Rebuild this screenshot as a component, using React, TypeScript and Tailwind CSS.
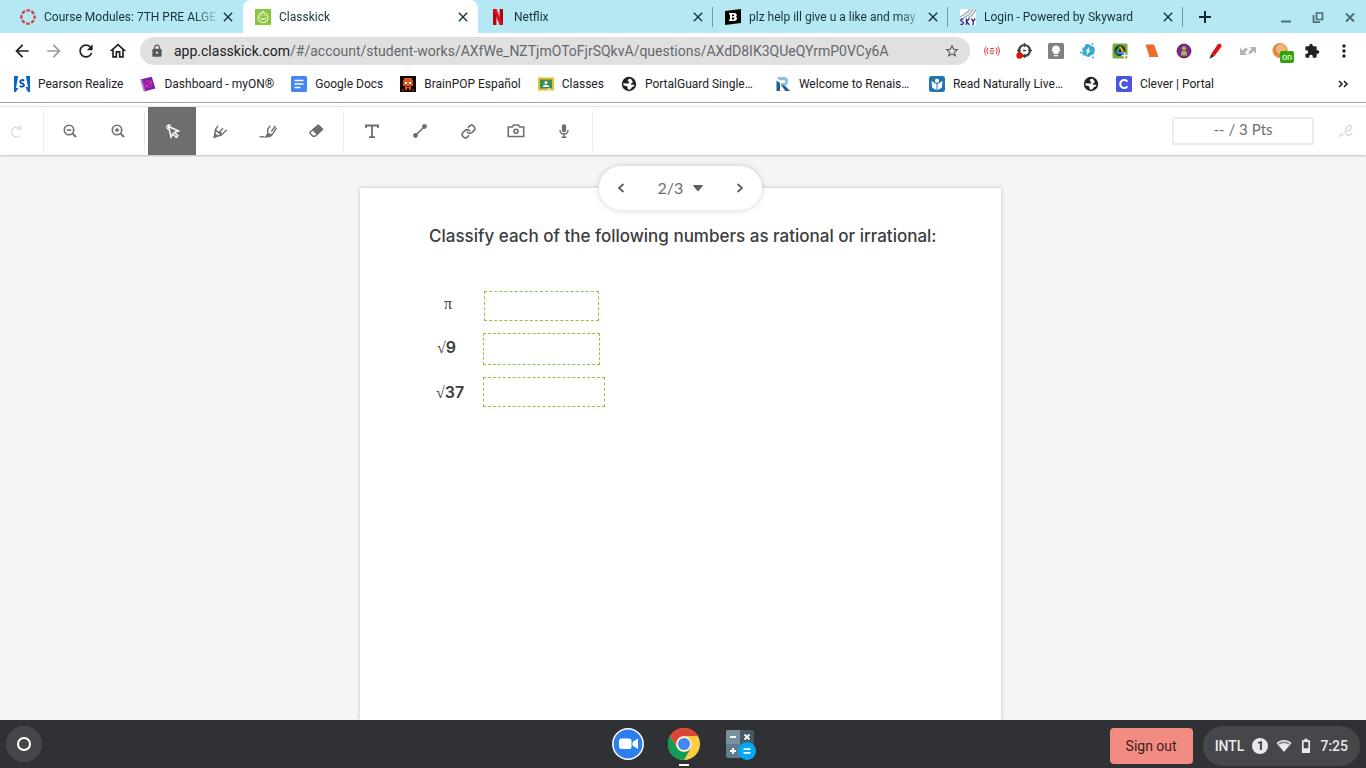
import type { ReactNode } from 'react'
import { Link } from 'lucide-react'
import {
    MdArrowBack,
    MdArrowForward,
    MdClose,
    MdExtension,
    MdLock,
    MdMoreVert,
    MdOutlineHome,
    MdRefresh,
    MdStarBorder,
} from 'react-icons/md'

interface Tab {
    title: string
    icon: ReactNode
    active?: boolean
    divider?: boolean
}

interface Item {
    label: string
    icon: ReactNode
    text?: string
}

const CanvasIcon = () => (
    <svg viewBox="0 0 16 16" className="size-4">
        <circle cx="8" cy="8" r="6.6" fill="none" stroke="#d64045" strokeWidth="2.4" strokeDasharray="3.6 1.58" strokeDashoffset="1.8" />
    </svg>
)

const ClasskickIcon = () => (
    <svg viewBox="0 0 16 16" className="size-4" fill="none" stroke="#eef8dc">
        <rect width="16" height="16" fill="#8cc63f" stroke="none" />
        <circle cx="8" cy="8.6" r="4.9" strokeWidth="1.1" />
        <path d="M4.6 7.8c.6 2.6 5.8 3 6.6.4M6 9.6c1 1.2 3.2 1 4 0M5.4 4.4 8 2.4l2 1.4M6.2 6.4h1.2M9 6.4h1.2" strokeWidth="1" />
    </svg>
)

const NetflixIcon = () => (
    <svg viewBox="0 0 16 16" className="size-4">
        <path d="M3 0h3.4v16L3 15.9zM9.6 0H13v16l-3.4-.1z" fill="#b1060f" />
        <path d="M3 0h3.4L13 16l-3.4-.2z" fill="#e50914" />
    </svg>
)

const BrainlyIcon = () => (
    <svg viewBox="0 0 16 16" className="size-4">
        <path d="M0 2 16 0v14L0 16z" fill="#000" />
        <path fillRule="evenodd" d="M4 4h5c3 0 3.6 2.8 1.8 3.8C13 8.8 12 12 9 12H4v-1.6h1V5.6H4zM7 5.6v1.6h1.4c1 0 1-1.6 0-1.6zm0 3v1.8h1.6c1.1 0 1.1-1.8 0-1.8z" fill="#fff" />
    </svg>
)

const SkywardIcon = () => (
    <svg viewBox="0 0 16 16" className="size-4" fill="none">
        <rect width="16" height="16" fill="#fff" />
        <path d="M0 8C4 6 8 4 10 0M3 9c5-2 8-5 10-9M8 9c4-2 6-5 8-9" stroke="#9aa4b4" strokeWidth="1.3" />
        <path d="M3.6 10.4C2 9.4.6 10 .8 11.4c.2 1.4 2.8 1.2 2.8 2.6 0 1.6-2 1.6-3.2.8M6.4 9.6V16M9.4 9.6l-3 3.2 3.2 3M11.4 9.6l1.8 3 2-3M13.2 12.6V16" stroke="#26358c" strokeWidth="1.4" />
    </svg>
)

const PearsonIcon = () => (
    <svg viewBox="0 0 16 16" className="size-4">
        <rect width="16" height="16" fill="#0a63c9" />
        <path d="M4.2 0h7.6l2.2 11h-2.600L14 16H1.600l3-4H2z" fill="#fff" />
        <path d="M10.200 4.800C8.400 3.400 6 3.900 6.200 5.900c.2 1.600 3.800 1.200 3.800 3.200 0 1.800-2.600 2-4.200.8" fill="none" stroke="#0a4bb0" strokeWidth="1.900" />
    </svg>
)

const MyOnIcon = () => (
    <svg viewBox="0 0 16 16" className="size-4">
        <path d="m.4 3.600 11.400-2.800 3.600 11.800L4 15.600z" fill="#7b1fa2" />
        <path d="m.4 3.600 3.600 12 1.400-.4L2 3.200z" fill="#c77ddb" />
        <circle cx="8.400" cy="8" r="3.200" fill="none" stroke="#d81bb5" strokeWidth="1.3" />
        <path d="m4.500 11.500 8-6.500" stroke="#f06292" strokeWidth=".8" />
    </svg>
)

const DocsIcon = () => (
    <svg viewBox="0 0 16 16" className="size-4">
        <rect width="16" height="16" rx="1.500" fill="#4285f4" />
        <path d="M3.500 4.500h9M3.500 8h9M3.500 11.500h6" stroke="#fff" strokeWidth="1.600" />
    </svg>
)

const BrainPopIcon = () => (
    <svg viewBox="0 0 16 16" className="size-4">
        <rect width="16" height="16" fill="#120c0a" />
        <path d="M4 2h8v2h1v6h-2v4H9v-2H7v2H5v-4H3V4h1z" fill="#d9531e" />
        <path d="M5 6h2v2H5zM9 6h2v2H9z" fill="#fff" />
        <path d="M6 10h4v1H6zM2 13h2v2H2zM12 13h2v2h-2z" fill="#7c2712" />
    </svg>
)

const ClassroomIcon = () => (
    <svg viewBox="0 0 16 16" className="size-4">
        <path d="M0 1.500h16v13H0z" fill="#e9bd2c" />
        <path d="M2 3.500h12v9H2z" fill="#359154" />
        <circle cx="8" cy="6.500" r="1.500" fill="#fff" />
        <path d="M4.800 11c.2-3 6.200-3 6.400 0z" fill="#fff" />
        <path d="M9.500 12.500h3v1h-3z" fill="#fff" />
    </svg>
)

const GlobeIcon = () => (
    <svg viewBox="0 0 16 16" className="size-4">
        <circle cx="8" cy="8" r="7.200" fill="#202124" />
        <path d="M9 2.800c-1.500 0-2.400.9-2.200 2 .2 1 1.400.7 1.500 1.700.1.900-1.300 1-2.600.9L2.400 7.200C2 9 2.800 9.600 4 9.700c1.600.1 2.600.5 2.500 1.800-.1 1 .7 2 1.500 2.200 2.300-.3 2.200-2.600 3.800-3 1-.2 1.600-.8 1.600-1.800-1.400-.3-2.600.3-3.700-.6.2-1.300 1.600-1 2-2 .3-1-.5-1.300-.9-2-.4-.8-.9-1.500-1.800-1.500z" fill="#fff" />
    </svg>
)

const RenaissanceIcon = () => (
    <svg viewBox="0 0 16 16" className="size-4">
        <path d="M2 1h7c5.500 0 5.500 8 1 8.400L15 15h-4L6 9V7h3c1.600 0 1.600-2.800 0-2.800H4z" fill="#8cc0de" />
        <path d="M1.500 4.500 5 7v8H1.500zM6 9l3.500.5L15 15h-4.500z" fill="#1e5f94" />
    </svg>
)

const ReadNaturallyIcon = () => (
    <svg viewBox="0 0 16 16" className="size-4">
        <rect width="16" height="16" rx="2.500" fill="#2276b0" />
        <path d="m8 2.500 2 1.200v2L8 7 6 5.700v-2zM2.500 5 7.500 8v6l-4.300-2.300zM13.500 5l-5 3v6l4.300-2.300z" fill="#fff" />
    </svg>
)

const CleverIcon = () => (
    <svg viewBox="0 0 16 16" className="size-4">
        <rect width="16" height="16" rx="1.500" fill="#4a54e0" />
        <path d="M11.400 5.600A4 4 0 1 0 11.400 10.400" fill="none" stroke="#fff" strokeWidth="2.100" />
    </svg>
)

const tabs: Tab[] = [
    { title: 'Course Modules: 7TH PRE ALGE', icon: <CanvasIcon /> },
    { title: 'Classkick', icon: <ClasskickIcon />, active: true },
    { title: 'Netflix', icon: <NetflixIcon />, divider: true },
    { title: 'plz help ill give u a like and may', icon: <BrainlyIcon />, divider: true },
    { title: 'Login - Powered by Skyward', icon: <SkywardIcon />, divider: true },
]

const bookmarks: Item[] = [
    { label: 'Pearson Realize', text: 'Pearson Realize', icon: <PearsonIcon /> },
    { label: 'myON', text: 'Dashboard - myON®', icon: <MyOnIcon /> },
    { label: 'Docs', text: 'Google Docs', icon: <DocsIcon /> },
    { label: 'BrainPOP', text: 'BrainPOP Español', icon: <BrainPopIcon /> },
    { label: 'Classes', text: 'Classes', icon: <ClassroomIcon /> },
    { label: 'PortalGuard', text: 'PortalGuard Single…', icon: <GlobeIcon /> },
    { label: 'Renaissance', text: 'Welcome to Renais…', icon: <RenaissanceIcon /> },
    { label: 'Read Naturally', text: 'Read Naturally Live…', icon: <ReadNaturallyIcon /> },
    { label: 'Website', icon: <GlobeIcon /> },
    { label: 'Clever', text: 'Clever | Portal', icon: <CleverIcon /> },
]

const extensions: Item[] = [
    {
        label: 'Broadcast',
        icon: (
            <svg viewBox="0 0 16 16" className="size-4" fill="none" stroke="#e0352b" strokeWidth="1">
                <path d="M2.200 3.500c-2 2.500-2 6.500 0 9M4 4.800c-1.400 1.900-1.400 4.500 0 6.400M13.800 3.500c2 2.500 2 6.500 0 9M12 4.800c1.400 1.900 1.400 4.500 0 6.400M6 6.200c1-1 3-1 4 0M5.500 8h5M6 9.800c1 1 3 1 4 0" />
            </svg>
        ),
    },
    {
        label: 'Target',
        icon: (
            <svg viewBox="0 0 16 16" className="size-4" fill="none">
                <circle cx="8.500" cy="7.500" r="5.500" stroke="#444" strokeWidth="2.200" />
                <path d="M8.500 0v4M8.500 11v4M1 7.500h4M12 7.500h4M7 7.500h3" stroke="#444" strokeWidth="1.500" />
                <circle cx="3.500" cy="12.500" r="3.200" fill="#e3120b" />
            </svg>
        ),
    },
    {
        label: 'Dim lights',
        icon: (
            <svg viewBox="0 0 16 16" className="size-4">
                <rect width="16" height="16" rx="1.500" fill="#808386" />
                <path d="M8 2.600a4 4 0 0 0-2.200 7.300V11h4.400V9.900A4 4 0 0 0 8 2.600zM6.200 12h3.600v1.200H6.200z" fill="#fff" />
            </svg>
        ),
    },
    {
        label: 'Lightning',
        icon: (
            <svg viewBox="0 0 16 16" className="size-4">
                <path d="M5 2c2-1.600 5-1 6 1 3 0 4.500 2.400 3.500 5 .4 2.600-1.500 4-3.500 4-1 2.500-4.500 2.500-5.500.6C2.500 13 1.500 10.500 3 8.500 1.500 6 3 4 5 4z" fill="#35a9d6" />
                <path d="M9.500 3.500 5.500 8.500h2l-1 4 4.200-5.200H8.500z" fill="#fff" />
                <circle cx="1" cy="9.500" r="1" fill="#35a9d6" />
                <circle cx="12.500" cy="1" r="1" fill="#35a9d6" />
                <circle cx="13" cy="14.500" r="1" fill="#35a9d6" />
            </svg>
        ),
    },
    {
        label: 'Drive saver',
        icon: (
            <svg viewBox="0 0 16 16" className="size-4">
                <rect x=".5" y=".5" width="15" height="15" rx="1.500" fill="#73ad3b" />
                <circle cx="8" cy="7.500" r="5.500" fill="#263238" />
                <path d="M6.900 3.500h1.600L5.800 10.800 3.700 9.300z" fill="#34a853" />
                <path d="M7.200 3.500h1.800l3.400 5.700h-2.200z" fill="#fbbc04" />
                <path d="M5.600 9h6.800l-1.200 2H4.600z" fill="#4285f4" />
                <path d="M12.500 9.500v6M9.500 12.500h6" stroke="#fff" strokeWidth="1.500" />
            </svg>
        ),
    },
    {
        label: 'Orange page',
        icon: (
            <svg viewBox="0 0 16 16" className="size-4">
                <path d="M1.500 1.500H10l4.500 12.500H6z" fill="#f26a2b" />
                <path d="M1.500 1.500 6 14v1.500z" fill="#b94a14" />
            </svg>
        ),
    },
    {
        label: 'Profile',
        icon: (
            <svg viewBox="0 0 16 16" className="size-4">
                <circle cx="8" cy="8" r="6.900" fill="#7b2a8c" stroke="#552060" strokeWidth="1" />
                <circle cx="8" cy="5.400" r="2.100" fill="#a5b94a" />
                <path d="M5.800 8h4.400l1 4.500H4.800z" fill="#a5b94a" />
            </svg>
        ),
    },
    {
        label: 'Marker',
        icon: (
            <svg viewBox="0 0 16 16" className="size-4">
                <path d="M10 1c2-1 4 .5 3.500 2.500L6.500 13 3.200 11z" fill="#dc1212" />
                <path d="m3.200 11 3.300 2L1.500 15.800z" fill="#3c1a14" />
            </svg>
        ),
    },
    {
        label: 'Arrows',
        icon: (
            <svg viewBox="0 0 16 16" className="size-4" fill="#b3b3b3">
                <path d="M0 4.500V12h7L4.800 9.800 8 6.500 6 4.500 2.400 7.600zM16 11V4H9.500l2 2L8.200 9.500l2 2L13.600 8z" />
            </svg>
        ),
    },
    {
        label: 'Blocker',
        icon: (
            <span className="relative block size-4">
                <svg viewBox="0 0 16 16" className="size-4">
                    <circle cx="8" cy="7.500" r="7.500" fill="#d98a45" />
                    <circle cx="9" cy="6" r="5" fill="#efb878" />
                </svg>
                <span className="absolute top-2 left-2 h-3 w-3.5 rounded-xs bg-[#2fa70a] text-center text-[9px] leading-3 text-white">on</span>
            </span>
        ),
    },
    { label: 'Extensions', icon: <MdExtension className="size-4 text-[#202124]" /> },
    { label: 'Menu', icon: <MdMoreVert className="size-4 scale-125 text-[#202124]" /> },
]

const strokeIcon = { viewBox: '0 0 20 20', className: 'size-5', fill: 'none', stroke: 'currentColor', strokeWidth: 1.6 }

const zoomTools: Item[] = [
    {
        label: 'Zoom out',
        icon: (
            <svg {...strokeIcon}>
                <circle cx="9" cy="9" r="4.700" />
                <path d="M12.400 12.400 16 16" strokeWidth="2" />
                <path d="M6.800 9h4.400" />
            </svg>
        ),
    },
    {
        label: 'Zoom in',
        icon: (
            <svg {...strokeIcon}>
                <circle cx="9" cy="9" r="4.700" />
                <path d="M12.400 12.400 16 16" strokeWidth="2" />
                <path d="M6.800 9h4.400M9 6.800v4.400" strokeWidth="1.400" />
            </svg>
        ),
    },
]

const drawTools: Item[] = [
    {
        label: 'Select',
        icon: (
            <svg {...strokeIcon} strokeWidth={1.5}>
                <path d="M6.500 5.500 16.500 10l-4 1.400 3.400 3.400-1.600 1.600-3.500-3.600L9 16z" />
                <path d="M6.500 8.400A2.300 2.300 0 1 1 8.800 4.600" strokeWidth="1.100" />
            </svg>
        ),
    },
    {
        label: 'Pen',
        icon: (
            <svg {...strokeIcon} strokeWidth={1.4}>
                <path d="M8 4.800 5.400 8.500 4.500 15.800l6.800-1.600 5.400-5.400M5.600 9l3.200 3 2.800 2M8.600 11.800l4.400-4.600M8.600 11.800h3.200" />
                <path d="M4.200 16.200 5 12.800l2.400 2.400z" fill="currentColor" />
            </svg>
        ),
    },
    {
        label: 'Highlighter',
        icon: (
            <svg {...strokeIcon} strokeWidth={1.4}>
                <path d="m12.200 4.600-2.600 4 .2 4.400 4.400.6L18.500 7.200M13.300 10.500 17.500 5M9.800 13l-1.400 2.600M14.200 13.600l-3 2" />
                <path d="M1.500 15.800h5" />
                <path d="M7.800 16 9.600 12.800l2.400 2.400z" fill="currentColor" />
            </svg>
        ),
    },
    {
        label: 'Eraser',
        icon: (
            <svg {...strokeIcon} strokeWidth={1.5}>
                <path d="M12.200 4.200 16.400 8.200 9 15.200H7l-3-3 .2-1.200z" strokeLinejoin="round" />
                <path d="M12.200 4.200 16.400 8.200 11.200 13.200 7 8.800z" fill="currentColor" />
            </svg>
        ),
    },
]

const insertTools: Item[] = [
    {
        label: 'Text',
        icon: (
            <svg {...strokeIcon} strokeWidth={1.8}>
                <path d="M4 7V4.500h12V7M10 4.500V16M7 16.200h6" />
            </svg>
        ),
    },
    {
        label: 'Line',
        icon: (
            <svg {...strokeIcon}>
                <path d="M5.500 14.500 14.500 5.500" />
                <circle cx="5.500" cy="14.500" r="1.600" fill="currentColor" />
                <circle cx="14.500" cy="5.500" r="1.600" fill="currentColor" />
            </svg>
        ),
    },
    { label: 'Link', icon: <Link size={15} strokeWidth={2.6} /> },
    {
        label: 'Camera',
        icon: (
            <svg {...strokeIcon}>
                <path d="M2.300 6h3.900l1.500-2h4.600l1.500 2h3.900v9.500H2.300z" />
                <circle cx="10" cy="10.300" r="2" />
            </svg>
        ),
    },
    {
        label: 'Microphone',
        icon: (
            <svg {...strokeIcon} strokeWidth={1.4}>
                <path d="M6 9c0 5.300 8 5.300 8 0M10 13v3.200M7.500 16.200h5" />
                <rect x="8.500" y="4" width="3" height="6.500" rx="1.500" fill="currentColor" />
            </svg>
        ),
    },
]

function ToolGroup({ tools, active }: { tools: Item[]; active?: string }) {
    return (
        <>
            {tools.map((tool) => (
                <button
                    key={tool.label}
                    aria-label={tool.label}
                    className={`flex h-12 w-12 items-center justify-center ${tool.label === active ? 'bg-[#6d6e70] text-white' : 'text-[#6d6e70]'}`}
                >
                    {tool.icon}
                </button>
            ))}
        </>
    )
}

function TabStrip() {
    return (
        <div className="flex h-[33px] shrink-0 items-stretch bg-[#b5e8f2] pl-2 text-[12px] text-[#17323a]">
            {tabs.map((tab) => (
                <div
                    key={tab.title}
                    className={`flex w-[235px] min-w-0 items-center ${tab.active ? 'rounded-t-lg bg-white' : ''}`}
                >
                    <div className="flex min-w-0 flex-1 items-center gap-2 pl-3">
                        <span className="shrink-0">{tab.icon}</span>
                        <span className="flex-1 overflow-hidden mask-r-from-85% whitespace-nowrap">{tab.title}</span>
                    </div>
                    <button aria-label={`Close ${tab.title.split(' ')[0]}`} className="mr-1.5 shrink-0">
                        <MdClose className="size-4 [stroke:currentColor]" />
                    </button>
                    <span className={`h-5 w-px ${tab.divider ? 'bg-[#6f9ba5]' : ''}`} />
                </div>
            ))}
            <button aria-label="New tab" className="ml-3.5">
                <svg viewBox="0 0 16 16" className="size-4" stroke="#10272d" strokeWidth="2">
                    <path d="M8 2v12M2 8h12" />
                </svg>
            </button>
            <div className="ml-auto flex items-center gap-4 pr-2 text-[#4f6c74]">
                <button aria-label="Minimize">
                    <svg viewBox="0 0 16 16" className="size-4" stroke="currentColor" strokeWidth="2">
                        <path d="M3 12.500h10" />
                    </svg>
                </button>
                <button aria-label="Restore">
                    <svg viewBox="0 0 16 16" className="size-4" fill="none" stroke="currentColor" strokeWidth="1.700">
                        <path d="M6.500 4h6v6.500h-6zM3.500 6v7.200H10" />
                    </svg>
                </button>
                <button aria-label="Close window">
                    <svg viewBox="0 0 16 16" className="size-4" stroke="currentColor" strokeWidth="2">
                        <path d="m4 4.500 8 8M12 4.500l-8 8" />
                    </svg>
                </button>
            </div>
        </div>
    )
}

function AddressBar() {
    return (
        <div className="flex h-9 shrink-0 items-center gap-3.5 bg-white px-3.5">
            <div className="flex gap-4 text-[#202124]">
                <button aria-label="Back"><MdArrowBack className="size-4 scale-125" /></button>
                <button aria-label="Forward" className="text-[#9a9c9f]"><MdArrowForward className="size-4 scale-125" /></button>
                <button aria-label="Reload"><MdRefresh className="size-4 scale-125" /></button>
                <button aria-label="Home"><MdOutlineHome className="size-4 scale-125" /></button>
            </div>
            <div className="flex h-7 min-w-0 flex-1 items-center rounded-full bg-[#e0e0e0] px-2.5">
                <MdLock className="mr-2.5 size-3.5 shrink-0 text-[#55585c]" />
                <div className="flex-1 truncate text-[14px] text-[#65686c]">
                    <span className="text-[#202124]">app.classkick.com</span>
                    /#/account/student-works/AXfWe_NZTjmOToFjrSQkvA/questions/AXdD8IK3QUeQYrmP0VCy6A
                </div>
                <button aria-label="Bookmark this page"><MdStarBorder className="size-4 text-[#55585c]" /></button>
            </div>
            <div className="flex gap-4">
                {extensions.map((ext) => (
                    <button key={ext.label} aria-label={ext.label}>{ext.icon}</button>
                ))}
            </div>
        </div>
    )
}

function BookmarksBar() {
    return (
        <nav className="flex h-[34px] shrink-0 items-center gap-[17px] border-b border-[#a8a8a8] bg-white px-3.5 pb-[3px] text-[12px] text-[#202124]">
            {bookmarks.map((b) => (
                <a key={b.label} href="#" aria-label={b.text ? undefined : b.label} className="flex items-center gap-2 whitespace-nowrap">
                    {b.icon}
                    {b.text && <span className={b.text.endsWith('…') ? 'min-w-[113px]' : ''}>{b.text}</span>}
                </a>
            ))}
            <button aria-label="More bookmarks" className="ml-auto">
                <svg viewBox="0 0 16 16" className="size-4" fill="none" stroke="currentColor" strokeWidth="1.600">
                    <path d="m3 5 3 3-3 3M8 5l3 3-3 3" />
                </svg>
            </button>
        </nav>
    )
}

function Toolbar() {
    return (
        <div className="relative mt-[3px] flex shrink-0 items-center border-t border-[#e6e6e6] bg-white shadow-[0_1px_2px_rgba(0,0,0,0.22)]">
            <button aria-label="Redo" className="flex h-10 w-11 items-center border-r border-[#ececec] pl-1.5 text-[#dedede]">
                <svg {...strokeIcon}>
                    <path d="M14 14.500a5 5 0 1 1 0-7" />
                    <path d="M14.500 4v4h-4" />
                </svg>
            </button>
            <div className="flex px-0.5"><ToolGroup tools={zoomTools} /></div>
            <span className="h-10 w-px bg-[#ececec]" />
            <div className="flex px-[3px]"><ToolGroup tools={drawTools} active="Select" /></div>
            <span className="h-10 w-px bg-[#ececec]" />
            <div className="flex px-1"><ToolGroup tools={insertTools} /></div>
            <span className="h-10 w-px bg-[#ececec]" />
            <button className="mr-6 ml-auto h-7 w-[142px] rounded-xs border-2 border-[#ebebeb] pb-1 font-['Lato','Open_Sans',sans-serif] text-[15px] leading-5 text-[#6d6e70]">
                -- / 3 Pts
            </button>
            <button aria-label="Signature" className="pr-3 text-[#dcdcdc]">
                <svg viewBox="0 0 18 18" className="size-4" fill="none" stroke="currentColor" strokeWidth="1.800">
                    <path d="M1 15.500c1.500-2.500 3-3.500 5-2M7.500 9.500c4 .5 8-2.500 7.500-5.500-.6-2.600-4.500-1.600-6 2.500-1.400 4-.6 7.300 2.200 7.300 2 0 3.600-1 4.800-2.500" />
                </svg>
            </button>
        </div>
    )
}

function Pager() {
    return (
        <div className="z-10 mt-[11px] flex h-11 w-[163px] items-center justify-between rounded-full bg-white px-3.5 text-[#5d5e60] shadow-[0_0_6px_rgba(0,0,0,0.18)]">
            <button aria-label="Previous question">
                <svg viewBox="0 0 16 16" className="size-4" fill="none" stroke="currentColor" strokeWidth="1.800"><path d="m10.500 4-4.500 4 4.500 4" /></svg>
            </button>
            <button className="flex items-center gap-2.5 text-[16px] text-[#6d6e70]">
                <span className="font-['Lato','Open_Sans',sans-serif]">2/3</span>
                <svg viewBox="0 0 10 8" className="h-2 w-2.5 fill-[#5d5e60]"><path d="M.5 1h9q.5.600 0 1.200L5.500 7H4.500L.5 2.200Q0 1.500.5 1z" /></svg>
            </button>
            <button aria-label="Next question">
                <svg viewBox="0 0 16 16" className="size-4" fill="none" stroke="currentColor" strokeWidth="1.800"><path d="m5.500 4 4.500 4-4.500 4" /></svg>
            </button>
        </div>
    )
}

function Root({ children }: { children: ReactNode }) {
    return (
        <>
            <span className="font-['Liberation_Serif',serif] font-normal">√</span>
            {children}
        </>
    )
}

function Worksheet() {
    const answer = 'border border-dashed border-[#8cc63f] bg-transparent px-2 text-[16px] outline-none'

    return (
        <section className="-mt-[22px] w-[641px] max-w-full flex-1 bg-white pt-9 pl-[69px] text-[#3c3c3e] shadow-[0_0_4px_rgba(0,0,0,0.22)]">
            <h1 className="text-[17px] leading-6 font-medium whitespace-nowrap">
                Classify each of the following numbers as rational or irrational:
            </h1>
            <div className="mt-[43px] flex flex-col gap-3 text-[16px] font-semibold">
                <div className="flex items-center">
                    <label htmlFor="pi" className="w-[55px] pb-1 pl-[15px] font-['Liberation_Serif',serif] font-normal">π</label>
                    <input id="pi" className={`${answer} h-[30px] w-[115px]`} />
                </div>
                <div className="flex items-center">
                    <label htmlFor="root9" className="w-[54px] pb-1 pl-2"><Root>9</Root></label>
                    <input id="root9" className={`${answer} h-8 w-[117px]`} />
                </div>
                <div className="flex items-center">
                    <label htmlFor="root37" className="w-[54px] pl-[7px]"><Root>37</Root></label>
                    <input id="root37" className={`${answer} h-[30px] w-[122px]`} />
                </div>
            </div>
        </section>
    )
}

function Shelf() {
    return (
        <footer className="relative flex h-12 shrink-0 items-center justify-between bg-[#303134] px-1.5">
            <button aria-label="Launcher" className="flex size-9 items-center justify-center rounded-full bg-[#454649]">
                <span className="size-3.5 rounded-full border-2 border-white" />
            </button>
            <div className="absolute inset-y-0 left-1/2 flex -translate-x-1/2 items-center gap-6 pl-0.5">
                <button aria-label="Zoom">
                    <svg viewBox="0 0 32 32" className="size-8">
                        <circle cx="16" cy="16" r="15.200" fill="#2d7ff0" stroke="#fff" strokeWidth="1.500" />
                        <rect x="7" y="10.500" width="12.500" height="10.500" rx="2.500" fill="#fff" />
                        <path d="m20.500 14 5.500-3.500v10.500l-5.500-3.500z" fill="#fff" />
                    </svg>
                </button>
                <button aria-label="Chrome" className="flex flex-col items-center gap-1 pt-1.5">
                    <svg viewBox="0 0 32 32" className="size-8">
                        <circle cx="16" cy="16" r="16" fill="#ffcd40" />
                        <path d="M2.140 8A16 16 0 0 1 29.860 8H16a8 8 0 0 0-6.930 12z" fill="#db4437" />
                        <path d="M2.140 8A16 16 0 0 0 16 32l6.930-12A8 8 0 0 1 9.070 20z" fill="#0f9d58" />
                        <circle cx="16" cy="16" r="7.600" fill="#f1f1f1" />
                        <circle cx="16" cy="16" r="6" fill="#4285f4" />
                    </svg>
                    <span className="h-0.5 w-2.5 bg-white" />
                </button>
                <button aria-label="Calculator">
                    <svg viewBox="0 0 32 32" className="size-8">
                        <rect x="2" y="2" width="28" height="28" rx="2" fill="#455a64" />
                        <path d="M4 2h12v28H4a2 2 0 0 1-2-2V4a2 2 0 0 1 2-2z" fill="#607d8b" />
                        <path d="M2 4a2 2 0 0 1 2-2h12v14H2z" fill="#78909c" />
                        <path d="M6 9h6M6 23h6M9 20v6M20.500 6.500l5 5M25.500 6.500l-5 5" stroke="#fff" strokeWidth="1.800" />
                        <circle cx="23" cy="23" r="9" fill="#03a9f4" />
                        <path d="M19.500 21.200h7M19.500 24.800h7" stroke="#fff" strokeWidth="1.800" />
                    </svg>
                </button>
            </div>
            <div className="flex items-center gap-2.5">
                <button className="mt-1 h-9 rounded bg-[#f28b82] px-4 text-[14px] text-[#3b1c1c]">Sign out</button>
                <button className="mt-1 flex h-10 items-center gap-2 rounded-full bg-[#45474a] px-3 text-[14px] font-medium text-[#e8eaed]">
                    <span>INTL</span>
                    <span className="flex size-4 items-center justify-center rounded-full bg-[#e8eaed] text-[12px] font-bold text-[#303134]">1</span>
                    <svg viewBox="0 0 16 16" className="size-4">
                        <path d="M8 14 .5 5C4.500 1 11.500 1 15.500 5z" fill="#e8eaed" />
                        <path d="M2.300 5.200C5.500 2.800 10.500 2.800 13.700 5.200l-1.200 1.500c-2.500-2-6.500-2-9 0z" fill="#85878a" />
                    </svg>
                    <svg viewBox="0 0 12 16" className="h-4 w-3" fill="none" stroke="#e8eaed" strokeWidth="1.700">
                        <path d="M2.800 3.200h6.400v11H2.800zM4.500 1.500h3" />
                        <path d="M3 11h6v3H3z" fill="#e8eaed" />
                    </svg>
                    <span>7:25</span>
                </button>
            </div>
        </footer>
    )
}

export default function App() {
    return (
        <div className="flex h-screen flex-col overflow-hidden bg-white font-['Roboto',sans-serif]">
            <TabStrip />
            <AddressBar />
            <BookmarksBar />
            <Toolbar />
            <main className="flex min-h-0 flex-1 flex-col items-center bg-[#f5f5f5] pr-[5px] font-['Inter',sans-serif]">
                <Pager />
                <Worksheet />
            </main>
            <Shelf />
        </div>
    )
}
